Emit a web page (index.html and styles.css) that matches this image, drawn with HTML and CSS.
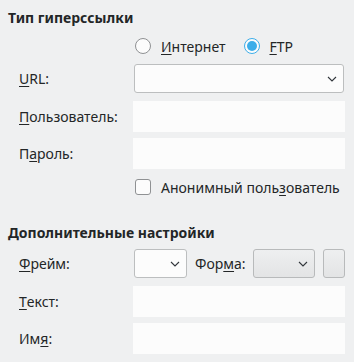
FILE: index.html
```html
<!DOCTYPE html>
<html>
<head>
<meta charset="utf-8">
<link rel="stylesheet" href="styles.css">
</head>
<body>
<div class="dialog">
  <div class="title t1">Тип гиперссылки</div>
  <div class="grid">
    <div class="radios">
      <label class="opt"><span class="radio"></span><span><u>И</u>нтернет</span></label>
      <label class="opt ftp"><span class="radio on"></span><span><u>F</u>TP</span></label>
    </div>

    <div class="lbl r-url"><u>U</u>RL:</div>
    <div class="combo wide r-url"><svg class="chev" width="10" height="6" viewBox="0 0 10 6"><path d="M1 1 L5 5 L9 1" fill="none" stroke="#31363b" stroke-width="1.1"/></svg></div>

    <div class="lbl r-user"><u>П</u>ользователь:</div>
    <div class="field r-user"></div>

    <div class="lbl r-pass">П<u>а</u>роль:</div>
    <div class="field r-pass"></div>

    <label class="opt check r-anon"><span class="box"></span><span>Анонимный поль<u>з</u>ователь</span></label>
  </div>

  <div class="title t2">Дополнительные настройки</div>
  <div class="grid grid2">
    <div class="lbl r-frame"><u>Ф</u>рейм:</div>
    <div class="framerow r-frame">
      <div class="combo small"><svg class="chev" width="10" height="6" viewBox="0 0 10 6"><path d="M1 1 L5 5 L9 1" fill="none" stroke="#31363b" stroke-width="1.1"/></svg></div>
      <span class="formlbl">Фор<u>м</u>а:</span>
      <div class="combo gray"><svg class="chev" width="10" height="6" viewBox="0 0 10 6"><path d="M1 1 L5 5 L9 1" fill="none" stroke="#31363b" stroke-width="1.1"/></svg></div>
      <div class="btn"></div>
    </div>

    <div class="lbl r-text"><u>Т</u>екст:</div>
    <div class="field r-text"></div>

    <div class="lbl r-name">Им<u>я</u>:</div>
    <div class="field r-name"></div>
  </div>
</div>
</body>
</html>
```

FILE: styles.css
```css
html, body {
  margin: 0;
  padding: 0;
  background: #eff0f1;
}
body {
  width: 354px;
  height: 362px;
  overflow: hidden;
  font-family: "Noto Sans", "Open Sans", sans-serif;
  font-size: 14px;
  color: #232627;
}
u {
  text-decoration: underline;
  text-decoration-thickness: 1px;
  text-underline-offset: 2px;
}
.dialog {
  padding: 9px 9px 0 8px;
}
.title {
  font-weight: bold;
  line-height: 18px;
  height: 18px;
}
.t2 {
  margin-top: 27px;
}
.grid {
  display: grid;
  grid-template-columns: 125px 212px;
  margin-top: 9px;
}
.grid2 {
  margin-top: 7px;
}
.radios {
  grid-column: 2;
  display: flex;
  height: 20px;
  align-items: center;
  padding-left: 2px;
}
.opt {
  display: flex;
  align-items: center;
  gap: 10px;
  height: 20px;
}
.ftp {
  margin-left: 19px;
  gap: 9px;
}
.radio {
  width: 14px;
  height: 14px;
  border: 1px solid #8f9193;
  border-radius: 50%;
  background: #fcfcfc;
  box-sizing: content-box;
  position: relative;
}
.radio.on {
  border-color: #3daee9;
}
.radio.on::after {
  content: "";
  position: absolute;
  left: 2px;
  top: 2px;
  width: 10px;
  height: 10px;
  border-radius: 50%;
  background: #3daee9;
}
.lbl {
  grid-column: 1;
  display: flex;
  align-items: center;
  padding-left: 11px;
  line-height: 18px;
}
.combo {
  height: 27px;
  border: 1px solid #bcbebf;
  border-radius: 3px;
  background: #fcfcfc;
  display: flex;
  align-items: center;
  justify-content: flex-end;
  box-sizing: content-box;
}
.combo .chev {
  margin-right: 6px;
}
.wide {
  grid-column: 2;
  margin: 0 1px;
}
.r-url { margin-top: 8px; }
.field {
  grid-column: 2;
  height: 31px;
  background: #fcfcfc;
}
.r-user { margin-top: 8px; }
.r-pass { margin-top: 6px; }
.check {
  grid-column: 2;
  margin-top: 8px;
  padding-left: 2px;
}
.box {
  width: 14px;
  height: 14px;
  border: 1px solid #8f9193;
  border-radius: 3px;
  background: #fcfcfc;
}
.framerow {
  grid-column: 2;
  display: flex;
  align-items: center;
  padding-left: 1px;
}
.small {
  width: 51px;
}
.formlbl {
  margin-left: 8px;
  width: 58px;
  white-space: nowrap;
}
.gray {
  width: 60px;
  background: linear-gradient(#eeeff0, #e3e4e5);
  border-color: #b8babb;
}
.btn {
  margin-left: 8px;
  width: 20px;
  height: 27px;
  border: 1px solid #b8babb;
  border-radius: 3px;
  background: linear-gradient(#eeeff0, #e3e4e5);
}
.r-text { margin-top: 8px; }
.r-name { margin-top: 6px; }
```
